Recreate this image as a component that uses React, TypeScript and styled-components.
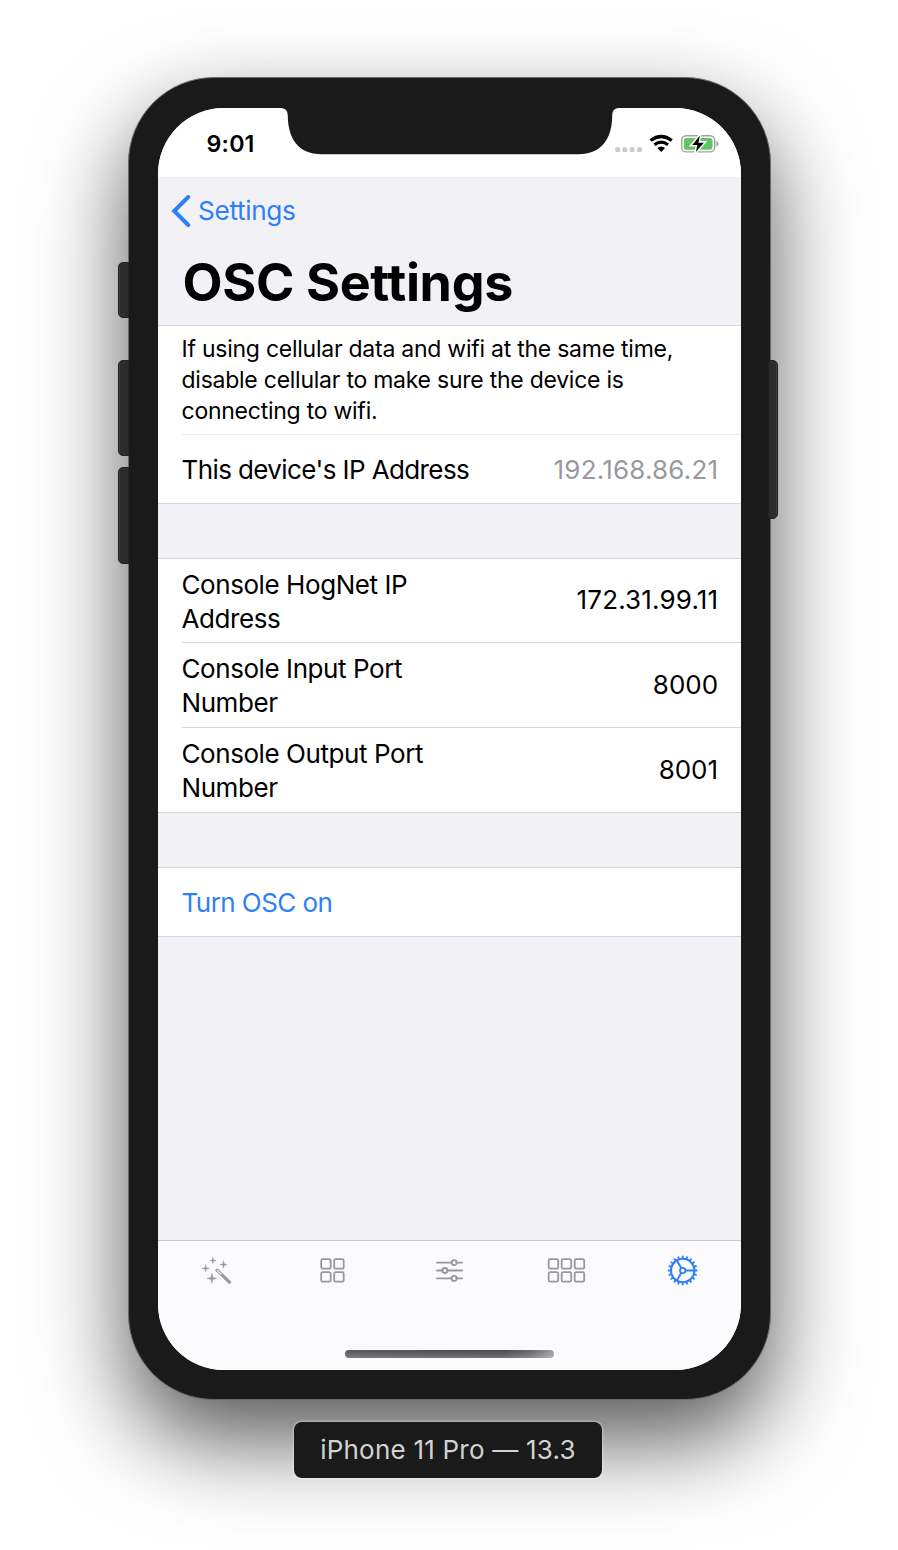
import React from 'react';
import styled, { createGlobalStyle } from 'styled-components';

const GlobalStyle = createGlobalStyle`
  * { box-sizing: border-box; }
  body {
    margin: 0;
    background: #fff;
    font-family: Inter, "Liberation Sans", sans-serif;
    color: #000;
  }
`;

const BLUE = '#2f7ff7';
const GRAY = '#98989c';
const LINE = '#d6d6da';

const Stage = styled.main`
  width: 898px;
  height: 1550px;
  padding-top: 77px;
  display: flex;
  flex-direction: column;
  align-items: center;
  overflow: hidden;
`;

const Phone = styled.div`
  position: relative;
  width: 643px;
  height: 1323px;
  border-radius: 86px;
  background: #1a1a1a;
  border: 1px solid #6a6a6a;
  padding: 30px 29px 29px 29px;
  box-shadow: 0 40px 90px rgba(0, 0, 0, 0.66);
`;

const SideButton = styled.div<{ $side: 'left' | 'right'; $top: number; $height: number }>`
  position: absolute;
  top: ${p => p.$top}px;
  ${p => p.$side}: ${p => (p.$side === 'left' ? -11 : -8)}px;
  width: ${p => (p.$side === 'left' ? 11 : 10)}px;
  height: ${p => p.$height}px;
  border: 1px solid #222;
  border-radius: ${p => (p.$side === 'left' ? '5px 0 0 5px' : '3px 5px 5px 3px')};
  background: #2c2c2c;
  box-shadow: inset ${p => (p.$side === 'left' ? '1px' : '-1px')} 0 0 #3c3c3c;
`;

const Screen = styled.div`
  position: relative;
  width: 583px;
  height: 1262px;
  display: flex;
  flex-direction: column;
  overflow: hidden;
  border-radius: 66px;
  background: #f2f1f6;
`;

const Notch = styled.svg`
  position: absolute;
  top: -1px;
  left: 120px;
`;

const StatusBar = styled.header`
  height: 68.5px;
  flex: none;
  display: flex;
  justify-content: space-between;
  padding: 22px 22px 0 49px;
  background: #fff;
`;

const Time = styled.span`
  font-size: 23.2px;
  line-height: 28px;
  font-weight: 600;
  letter-spacing: 0.2px;
`;

const StatusIcons = styled.svg`
  display: block;
`;

const NavBar = styled.nav`
  height: 149px;
  flex: none;
  padding: 16px 0 0 13px;
  border-bottom: 1px solid ${LINE};
`;

const Back = styled.a`
  display: flex;
  align-items: center;
  gap: 7.6px;
  height: 36px;
  color: ${BLUE};
  font-size: 26.2px;
  letter-spacing: -0.36px;
`;

const Title = styled.h1`
  margin: 23px 0 0 12px;
  font-size: 52px;
  line-height: 62px;
  font-weight: 700;
  letter-spacing: -0.35px;
  white-space: nowrap;
`;

const Group = styled.section<{ $gap?: number }>`
  flex: none;
  margin-top: ${p => p.$gap ?? 0}px;
  padding-left: 24px;
  background: #fff;
  border-top: ${p => (p.$gap ? `1px solid ${LINE}` : '0')};
  border-bottom: 1px solid ${LINE};
`;

const Row = styled.div<{ $height: number; $drop?: number }>`
  height: ${p => p.$height}px;
  display: flex;
  align-items: center;
  justify-content: space-between;
  padding: ${p => p.$drop ?? 0}px 23px 0 0;
  font-size: 26px;
  line-height: 34px;
  & + & { border-top: 1px solid ${LINE}; }
`;

const Note = styled.p`
  margin: 0;
  height: 109px;
  padding-top: 8.5px;
  font-size: 23px;
  line-height: 31px;
  letter-spacing: -0.25px;
  white-space: nowrap;
  border-bottom: 1px solid #ececee;
`;

const Label = styled.span<{ $spacing?: number; $twoLine?: boolean }>`
  letter-spacing: ${p => p.$spacing ?? -0.43}px;
  white-space: nowrap;
  padding-top: ${p => (p.$twoLine ? 3 : 0)}px;
  ${p => p.$twoLine && 'display: block;'}
`;

const Value = styled.span<{ $muted?: boolean; $spacing?: number }>`
  color: ${p => (p.$muted ? '#99999d' : '#000')};
  letter-spacing: ${p => p.$spacing ?? 0}px;
  margin-right: ${p => -0.6 - (p.$spacing ?? 0)}px;
`;

const Action = styled.a`
  color: ${BLUE};
  letter-spacing: -0.55px;
`;

const TabBar = styled.footer`
  height: 130px;
  flex: none;
  margin-top: auto;
  display: flex;
  flex-direction: column;
  align-items: center;
  justify-content: space-between;
  padding-bottom: 12.5px;
  background: #fbfbfd;
  border-top: 1px solid #c9c9cd;
`;

const Tabs = styled.div`
  width: 100%;
  display: grid;
  grid-template-columns: repeat(5, 1fr);
  justify-items: center;
  padding-top: 8px;
`;

const HomeIndicator = styled.div`
  width: 209px;
  height: 8px;
  border-radius: 4px;
  background: linear-gradient(180deg, rgba(255,255,255,0) 20%, rgba(255,255,255,.2)),
    linear-gradient(90deg, #5c5c5e, #505052 75%, #68686a 88%, #a0a0a2);
`;

const Caption = styled.div`
  margin: 22px 2px 0 0;
  width: 308px;
  height: 56px;
  border-radius: 8px;
  background: #1a1a1a;
  box-shadow: 0 0 0 1.5px rgba(255, 255, 255, 0.28);
  position: relative;
  color: #d2d2d2;
  font-size: 26px;
  line-height: 56px;
  letter-spacing: 0.22px;
  text-align: center;
  white-space: nowrap;
`;

const TabIcon = ({ active, children }: { active?: boolean; children: React.ReactNode }) => (
  <svg width="43" height="43" viewBox="-21.5 -21.5 43 43" fill="none" stroke={active ? BLUE : GRAY} strokeWidth="1.8" strokeLinecap="round">
    {children}
  </svg>
);

const sparkle = (x: number, y: number, r: number) => {
  const k = r * 0.2;
  return `M${x} ${y - r}L${x + k} ${y - k}L${x + r} ${y}L${x + k} ${y + k}L${x} ${y + r}L${x - k} ${y + k}L${x - r} ${y}L${x - k} ${y - k}Z`;
};

const Wand = () => (
  <g transform="translate(1 -0.3)">
    <path
      d={sparkle(-10.8, -1.8, 3.6) + sparkle(-3.6, -9.6, 3.1) + sparkle(7, -5.6, 3.6) + sparkle(-4.6, 8.2, 4.8)}
      fill={GRAY}
      strokeWidth="0.5"
    />
    <path d="M0.6 0L12.9 12" strokeWidth="3.2" />
    <path d="M0.8 0.2L4.6 3.9" stroke="#fbfbfd" strokeWidth="1.1" />
  </g>
);

const Squares = ({ columns }: { columns: number[] }) => (
  <>
    {columns.map(x => [-11.3, 1.7].map(y => (
      <rect key={`${x}${y}`} x={x} y={y} width="9.5" height="9.5" rx="1.5" />
    )))}
  </>
);

const Sliders = () => (
  <g transform="translate(1 0)">
    {[[-7.9, 4.6], [0, -4.6], [7.9, 4.6]].map(([y, x]) => (
      <g key={y}>
        <path d={`M-12.6 ${y}H${x - 2.6}M${x + 2.6} ${y}H12.6`} />
        <circle cx={x} cy={y} r="2.5" />
      </g>
    ))}
  </g>
);

const Gear = () => (
  <g transform="translate(0.2 0)">
    <circle r="11.7" strokeWidth="2.1" />
    <circle r="2.7" />
    <path d="M3 0H11.5M-1.5 -2.6L-5.8 -10M-1.5 2.6L-5.8 10" strokeWidth="1.9" />
    {Array.from({ length: 20 }, (_, i) => (
      <path key={i} d="M12.5 0H14" strokeWidth="1.9" transform={`rotate(${i * 18})`} />
    ))}
  </g>
);

export default function App() {
  return (
    <>
      <GlobalStyle />
      <Stage>
        <Phone>
          <SideButton $side="left" $top={184} $height={56} />
          <SideButton $side="left" $top={282} $height={96} />
          <SideButton $side="left" $top={389} $height={97} />
          <SideButton $side="right" $top={282} $height={159} />
          <Screen>
            <StatusBar>
              <Time>9:01</Time>
              <StatusIcons width="106" height="28" viewBox="0 0 106 28">
                {[0, 7.3, 14.6, 21.9].map(x => (
                  <rect key={x} x={x + 2.2} y="17.3" width="4.8" height="4.8" rx="1.4" fill="#cbcbcd" />
                ))}
                <g fill="none" stroke="#000" strokeWidth="3.2">
                  <path d="M37.6 10.6Q48.2 2.4 58.8 10.6" />
                  <path d="M41.4 14.8Q48.2 9.6 55 14.8" />
                </g>
                <path d="M44.3 18Q48.2 15 52.1 18L48.2 22Z" />
                <rect x="68.7" y="5.7" width="33" height="16.2" rx="4.6" fill="none" stroke="#a2a2a4" strokeWidth="1.4" />
                <rect x="70.9" y="7.9" width="28.6" height="11.8" rx="2.6" fill="#65c466" />
                <path d="M103.4 11q2.2 .7 2.2 2.8t-2.2 2.8Z" fill="#a2a2a4" />
                <path d="M87 5L78.6 15.2H84.1L82.6 22.6L91.4 12.4H85.7Z" stroke="#fff" strokeWidth="2.6" />
                <path d="M87 5.6L79.2 14.9H84.4L82.8 22L90.8 12.7H85.4Z" />
              </StatusIcons>
            </StatusBar>
            <NavBar>
              <Back>
                <svg width="20" height="34" viewBox="0 0 20 34" fill="none" stroke={BLUE} strokeWidth="4" strokeLinecap="round" strokeLinejoin="miter">
                  <path d="M17.2 3L3.2 17L17.2 31" />
                </svg>
                Settings
              </Back>
              <Title>OSC Settings</Title>
            </NavBar>
            <Group>
              <Note>
                If using cellular data and wifi at the same time,<br />
                disable cellular to make sure the device is<br />
                connecting to wifi.
              </Note>
              <Row $height={68} $drop={2}>
                <Label $spacing={-0.6}>This device's IP Address</Label>
                <Value $muted $spacing={0.2}>192.168.86.21</Value>
              </Row>
            </Group>
            <Group $gap={54}>
              <Row $height={83}>
                <Label $twoLine>Console HogNet IP<br />Address</Label>
                <Value $spacing={0.15}>172.31.99.11</Value>
              </Row>
              <Row $height={85}>
                <Label $twoLine>Console Input Port<br />Number</Label>
                <Value>8000</Value>
              </Row>
              <Row $height={85}>
                <Label $twoLine>Console Output Port<br />Number</Label>
                <Value>8001</Value>
              </Row>
            </Group>
            <Group $gap={54}>
              <Row $height={68} $drop={2}>
                <Action>Turn OSC on</Action>
              </Row>
            </Group>
            <TabBar>
              <Tabs>
                <TabIcon><Wand /></TabIcon>
                <TabIcon><Squares columns={[-11.3, 1.7]} /></TabIcon>
                <TabIcon><Sliders /></TabIcon>
                <TabIcon><Squares columns={[-16.8, -3.8, 9.2]} /></TabIcon>
                <TabIcon active><Gear /></TabIcon>
              </Tabs>
              <HomeIndicator />
            </TabBar>
            <Notch width="343" height="48" viewBox="0 0 343 48">
              <path d="M0 0V1C7 1 9.5 2 9.8 9C10 30 19 47.3 44 47.3H300C325 47.3 334 30 334.2 9C334.5 2 337 1 343 1V0Z" fill="#1a1a1a" />
            </Notch>
          </Screen>
        </Phone>
        <Caption>iPhone 11 Pro — 13.3</Caption>
      </Stage>
    </>
  );
}
